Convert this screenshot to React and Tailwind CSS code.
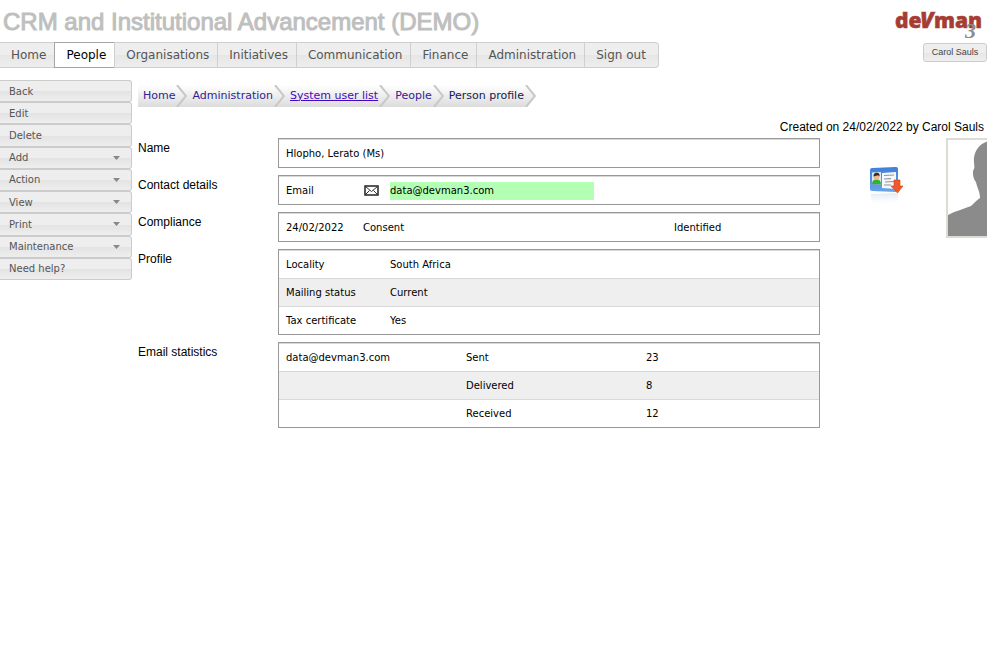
const navItems = ["Home", "People", "Organisations", "Initiatives", "Communication", "Finance", "Administration", "Sign out"];

const sideItems = [
  ["Back", false],
  ["Edit", false],
  ["Delete", false],
  ["Add", true],
  ["Action", true],
  ["View", true],
  ["Print", true],
  ["Maintenance", true],
  ["Need help?", false],
];

const crumbs = ["Home", "Administration", "System user list", "People", "Person profile"];

function Logo() {
  return (
    <svg className="block h-8 w-[88px] overflow-visible" viewBox="0 0 88 32" role="img" aria-label="devman 3">
      <g fill="#a63d33" stroke="#a63d33" strokeWidth=".5" fontFamily="'Open Sans', sans-serif" fontWeight="800" fontSize="21">
        <text x="-1" y="19">de</text>
        <text x="24" y="19" fontStyle="italic" fontSize="22">V</text>
        <text x="38" y="19">man</text>
      </g>
      <text x="69" y="29" fill="#8c8c8c" fontFamily="'Liberation Serif', serif" fontStyle="italic" fontWeight="700" fontSize="22">3</text>
    </svg>
  );
}

function Chevron({ last }) {
  return (
    <svg className="ml-px block h-[22px] w-[11px]" viewBox="0 0 11 22" aria-hidden="true">
      {last && <path d="M1 0H11V22H1L10 11Z" fill="#fff" />}
      <path d="M1 0L10 11L1 22" fill="none" stroke="#c8c8c8" strokeWidth="2" />
    </svg>
  );
}

function CardIcon() {
  return (
    <svg className="h-[42px] w-[36px]" viewBox="0 0 36 42" aria-hidden="true">
      <defs>
        <linearGradient id="card" x1="0" y1="0" x2="0" y2="1">
          <stop offset="0" stopColor="#3f7fd6" />
          <stop offset="1" stopColor="#6aa5ea" />
        </linearGradient>
        <linearGradient id="shade" x1="0" y1="0" x2="0" y2="1">
          <stop offset="0" stopColor="#c9dcf0" stopOpacity=".6" />
          <stop offset="1" stopColor="#fff" stopOpacity="0" />
        </linearGradient>
      </defs>
      <path d="M3 28L30 27V34L4 41Z" fill="url(#shade)" />
      <path d="M4 2L28 1Q30 1 30 3V24Q30 26 28 26L4 25Q2 25 2 23V4Q2 2 4 2Z" fill="url(#card)" />
      <path d="M14 7L28 6V23L14 22Z" fill="#f6f8fb" />
      <path d="M16 9.500L26 9M16 13L23 12.700M17 16L26 15.500M16 19L23 19" stroke="#8d959e" strokeWidth="1.200" />
      <path d="M4 6.500L13 6V18.500L4 18Z" fill="#d9e9f8" />
      <path d="M4 18Q4 13 9 13.500Q13 13.500 13 18.500Z" fill="#35b035" />
      <circle cx="8.500" cy="11" r="2.700" fill="#eab98c" />
      <path d="M5.500 10.500Q5.500 6.500 9 6.800Q12 7 11.500 10.500L10 9.300Z" fill="#3b2a1e" />
      <path d="M26 14H32V20H35L29.500 27L23 20H26Z" fill="#ee5a2b" stroke="#c9441b" strokeWidth=".6" />
    </svg>
  );
}

function Silhouette() {
  return (
    <div className="h-[100px] w-[92px] shrink-0 border-2 border-[#dcdcd6]">
      <svg className="block h-full w-full" viewBox="0 0 88 96" role="img" aria-label="No photo">
        <path
          d="M44 0C34 2 27 8 26 18C25.500 24 27 26 26 29C24 31 25 39 28 42C29 48 32 51 32 58C28 61 26 63 23 66C16 69 7 71 0 75V96H88V75C81 71 72 69 65 66C62 63 60 61 56 58C56 51 59 48 60 42C63 39 64 31 62 29C61 26 62.500 24 62 18C61 8 54 2 44 0Z"
          fill="#8b8b8b"
        />
      </svg>
    </div>
  );
}

function Envelope() {
  return (
    <svg className="block h-[11px] w-[15px]" viewBox="0 0 15 11" role="img" aria-label="Send email">
      <rect x="1" y="1" width="13" height="9" fill="#fff" stroke="#222" strokeWidth="1.500" />
      <path d="M1.500 1.500L7.500 6.500L13.500 1.500M1.500 9.500L5.500 5.500M13.500 9.500L9.500 5.500" fill="none" stroke="#333" />
    </svg>
  );
}

function Section({ title, widths, rows }) {
  return (
    <section className="flex">
      <h2 className="w-[140px] shrink-0 leading-5">{title}</h2>
      <div className="flex-1 border border-[#999]">
        <table className="w-full table-fixed border-separate border-spacing-0 text-left font-['DejaVu_Sans',sans-serif] text-[10px]">
          <colgroup>
            {widths.map((w, i) => <col key={i} className={w} />)}
          </colgroup>
          <tbody>
            {rows.map((row, r) => (
              <tr key={r} className="even:bg-[#efefef]">
                {row.map((cell, c) => (
                  <td key={c} className="h-7 border-t border-[#d8d8d8] py-0 pr-0 pl-[7px]">{cell}</td>
                ))}
              </tr>
            ))}
          </tbody>
        </table>
      </div>
    </section>
  );
}

const bar = "bg-linear-to-b from-[#eeeeee] from-50% via-[#e6e6e6] via-50% to-[#eeeeee]";

export default function App() {
  return (
    <div className="overflow-hidden bg-white font-['Liberation_Sans',Arial,sans-serif] text-[12px] text-black">
      <header className="flex items-start justify-between">
        <div className="min-w-0">
          <h1 className="h-[42px] pt-[2px] pl-[3px] text-[24px] leading-10 text-[#bfbfbf] [-webkit-text-stroke:1px_#bfbfbf]">
            CRM and Institutional Advancement (DEMO)
          </h1>
          <nav aria-label="Main" className={"flex h-[26px] w-max rounded-r border border-l-0 border-[#cfcfcf] font-['DejaVu_Sans',sans-serif] text-[#555] " + bar}>
            {navItems.map((item) => (
              <a
                key={item}
                href="#"
                aria-current={item === "People" ? "page" : undefined}
                className={
                  item === "People"
                    ? "-my-px flex items-center border border-r-0 border-[#a5a5a5] bg-white pr-2 pl-[11px] text-black"
                    : "flex items-center border-l border-[#cfcfcf] pr-2 pl-[11px] first:border-l-0 last:pr-3"
                }
              >
                {item}
              </a>
            ))}
          </nav>
        </div>
        <div className="flex flex-col items-end pt-[9px]">
          <div className="pr-[3px]"><Logo /></div>
          <button type="button" className={"mt-[2px] h-[19px] w-16 rounded-[3px] border border-[#ccc] text-[9px] text-[#444] " + bar}>
            Carol Sauls
          </button>
        </div>
      </header>

      <div className="mt-3 flex items-start">
        <nav aria-label="Actions" className="grid h-[200px] w-[132px] shrink-0 grid-rows-9 font-['DejaVu_Sans',sans-serif] text-[10px] text-[#555]">
          {sideItems.map(([label, menu]) => (
            <button
              key={label}
              type="button"
              className="flex items-center justify-between rounded-r-[3px] border border-l-0 border-[#cccccc] bg-linear-to-b from-[#eeeeee] from-50% via-[#e3e3e3] via-50% to-[#eeeeee] pr-[11px] pl-[9px]"
            >
              {label}
              {menu && (
                <svg className="h-1 w-[7px]" viewBox="0 0 7 4" aria-hidden="true">
                  <path d="M0 0H7L3.500 4Z" fill="#888" />
                </svg>
              )}
            </button>
          ))}
        </nav>

        <main className="min-w-0 flex-1 pt-[5px] pl-[6px]">
          <nav aria-label="Breadcrumb" className="flex">
            <ol className="flex h-[22px] items-center bg-linear-to-b from-white to-[#dcdcdc] font-['DejaVu_Sans',sans-serif] text-[11px]">
              {crumbs.map((c, i) => (
                <li key={c} className="flex items-center pl-[5px]">
                  <a
                    href="#"
                    className={i === 2 ? "text-[#4509c4] underline" : i === 4 ? "text-[#13204d]" : "text-[#2f2394]"}
                  >
                    {c}
                  </a>
                  <Chevron last={i === 4} />
                </li>
              ))}
            </ol>
          </nav>
          <p className="mt-[10px] pr-[3px] text-right leading-5">Created on 24/02/2022 by Carol Sauls</p>

          <div className="mt-px flex items-start">
            <div className="flex min-w-0 flex-1 flex-col gap-[7px]">
              <Section title="Name" widths={["w-full"]} rows={[["Hlopho, Lerato (Ms)"]]} />
              <Section
                title="Contact details"
                widths={["w-[78px]", "w-[26px]", "w-auto"]}
                rows={[[
                  "Email",
                  <Envelope key="icon" />,
                  <div key="mail" className="h-[18px] w-[204px] bg-[#b3ffb3] leading-[18px]">data@devman3.com</div>,
                ]]}
              />
              <Section title="Compliance" widths={["w-[77px]", "w-auto", "w-[152px]"]} rows={[["24/02/2022", "Consent", "Identified"]]} />
              <Section
                title="Profile"
                widths={["w-[104px]", "w-auto"]}
                rows={[["Locality", "South Africa"], ["Mailing status", "Current"], ["Tax certificate", "Yes"]]}
              />
              <Section
                title="Email statistics"
                widths={["w-1/3", "w-1/3", "w-1/3"]}
                rows={[["data@devman3.com", "Sent", "23"], ["", "Delivered", "8"], ["", "Received", "12"]]}
              />
            </div>
            <aside className="flex w-[167px] shrink-0 items-start pl-12">
              <a href="#" aria-label="Download contact card" className="mt-7 mr-[42px] shrink-0"><CardIcon /></a>
              <Silhouette />
            </aside>
          </div>
        </main>
      </div>
    </div>
  );
}
